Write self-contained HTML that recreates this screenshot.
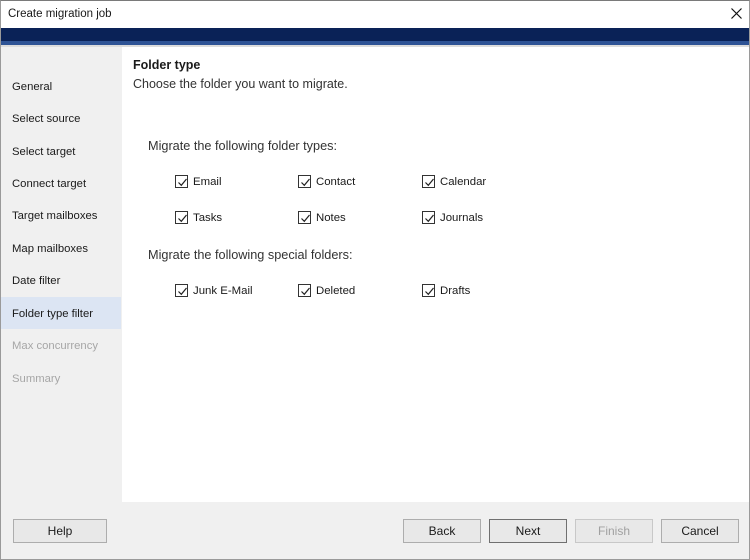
<!DOCTYPE html>
<html><head><meta charset="utf-8"><style>
*{margin:0;padding:0;box-sizing:border-box}
body{width:750px;height:560px;overflow:hidden;background:#f0f0f0;font-family:"Segoe UI","Liberation Sans",sans-serif;font-size:12px;color:#1a1a1a;position:relative}
.win{position:absolute;left:0;top:0;width:750px;height:560px;border:1px solid #9a9a9a;border-top:1px solid #7a7a7a}
.t{position:absolute;white-space:nowrap}
.title{position:absolute;left:1px;top:1px;width:748px;height:27px;background:#fff}
.band{position:absolute;left:1px;top:28px;width:748px;height:13px;background:#0a2257}
.band2{position:absolute;left:1px;top:41px;width:748px;height:4px;background:#2e5395}
.line{position:absolute;left:1px;top:45px;width:748px;height:2px;background:#dcdcdc}
.side{position:absolute;left:1px;top:47px;width:121px;height:455px;background:#f0f0f0}
.content{position:absolute;left:122px;top:47px;width:627px;height:455px;background:#fff}
.sel{position:absolute;left:1px;top:297px;width:120px;height:32px;background:#dce5f3}
.nav{position:absolute;left:12px;font-size:11.3px;color:#1a1a1a}
.dis{color:#a6a6a6}
.cb{position:absolute;width:13px;height:13px;border:1px solid #333;background:#fff}
.cb svg{position:absolute;left:1px;top:1px}
.lbl{position:absolute;font-size:11.4px}
.btn{position:absolute;top:519px;height:24px;border:1px solid #adadad;background:#e8e8e8;text-align:center;line-height:22px;font-size:12px}
</style></head><body>
<div class="win"></div>
<div class="title"></div>
<div class="t" style="left:8px;top:8px;font-size:11.5px">Create migration job</div>
<svg style="position:absolute;left:731px;top:8px" width="11" height="11"><path d="M0.5 0.5L10.5 10.5M10.5 0.5L0.5 10.5" stroke="#111" stroke-width="1.2"/></svg>
<div class="band"></div><div class="band2"></div><div class="line"></div>
<div class="side"></div>
<div class="content"></div>
<div class="sel"></div>
<div class="nav t" style="top:81px">General</div>
<div class="nav t" style="top:113px">Select source</div>
<div class="nav t" style="top:146px">Select target</div>
<div class="nav t" style="top:178px">Connect target</div>
<div class="nav t" style="top:210px">Target mailboxes</div>
<div class="nav t" style="top:243px">Map mailboxes</div>
<div class="nav t" style="top:275px">Date filter</div>
<div class="nav t" style="top:308px">Folder type filter</div>
<div class="nav t dis" style="top:340px">Max concurrency</div>
<div class="nav t dis" style="top:373px">Summary</div>
<div class="t" style="left:133px;top:58px;font-weight:bold;font-size:12.5px">Folder type</div>
<div class="t" style="left:133px;top:77px;font-size:12.5px;color:#333">Choose the folder you want to migrate.</div>
<div class="t" style="left:148px;top:139px;font-size:12.7px;color:#333">Migrate the following folder types:</div>
<div class="t" style="left:148px;top:248px;font-size:12.7px;color:#333">Migrate the following special folders:</div>
<div id="cbs"></div>
<div class="btn" style="left:13px;width:94px">Help</div>
<div class="btn" style="left:403px;width:78px">Back</div>
<div class="btn" style="left:489px;width:78px;border-color:#707070">Next</div>
<div class="btn" style="left:575px;width:78px;color:#a0a0a0;border-color:#c8c8c8">Finish</div>
<div class="btn" style="left:661px;width:78px">Cancel</div>
<script>
var items=[[175,175,'Email'],[298,175,'Contact'],[422,175,'Calendar'],[175,211,'Tasks'],[298,211,'Notes'],[422,211,'Journals'],[175,284,'Junk E-Mail'],[298,284,'Deleted'],[422,284,'Drafts']];
var h='';items.forEach(function(i){h+='<div class="cb" style="left:'+i[0]+'px;top:'+i[1]+'px"><svg width="11" height="11"><path d="M1.5 5.5L4.3 8.3L9.5 2" fill="none" stroke="#222" stroke-width="1.2"/></svg></div><div class="lbl t" style="left:'+(i[0]+18)+'px;top:'+(i[1]+1)+'px">'+i[2]+'</div>';});
document.getElementById('cbs').innerHTML=h;
</script>
</body></html>
